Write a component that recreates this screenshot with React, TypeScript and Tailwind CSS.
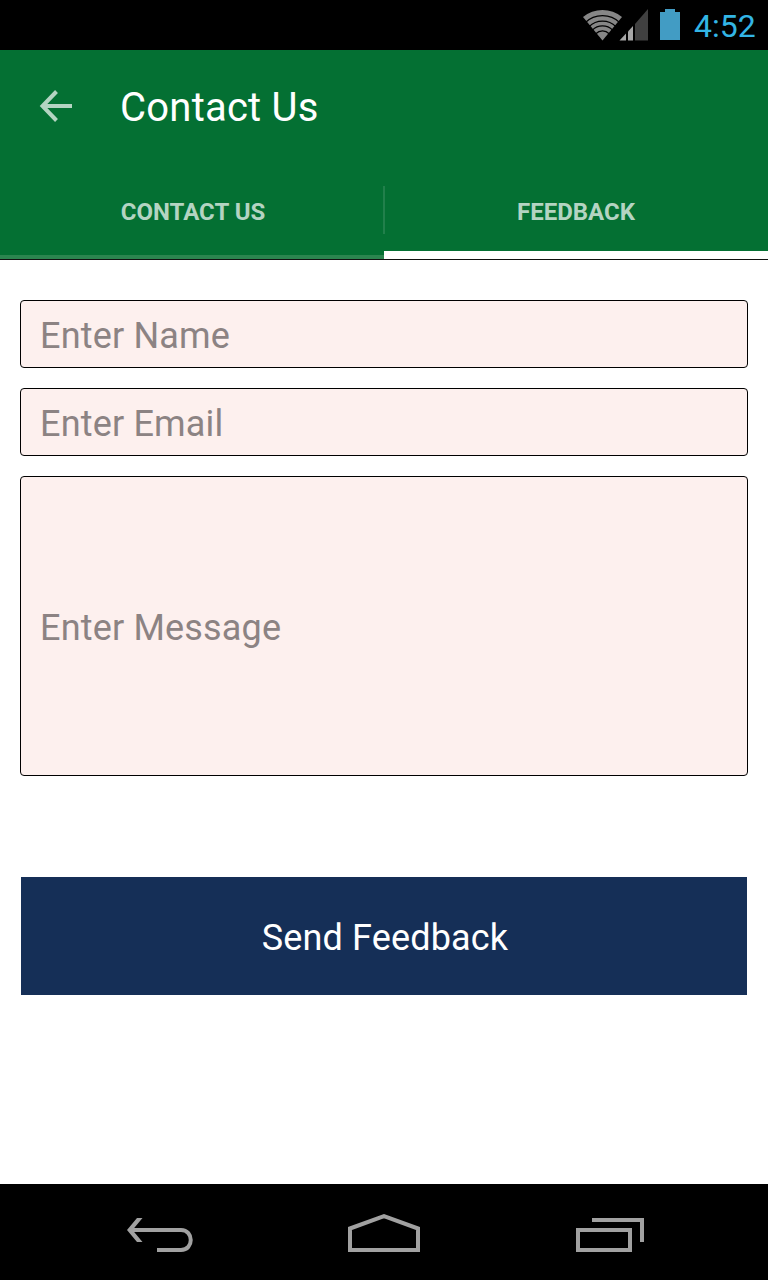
import React from 'react';

function StatusBar() {
  return (
    <div className="flex h-[50px] shrink-0 items-center bg-black pl-[580px]">
      <svg width="112" height="50" viewBox="580 0 112 50" className="shrink-0">
        <path d="M602.5 40.5 L583 17 A30.5 30.5 0 0 1 622 17 Z" fill="#868686" />
        <g fill="none" stroke="#000" strokeWidth="1.2">
          <path d="M585.1 22.7 A24.9 24.9 0 0 1 619.9 22.7" />
          <path d="M589 26.7 A19.3 19.3 0 0 1 616 26.7" />
          <path d="M592.3 30.1 A14.5 14.5 0 0 1 612.7 30.1" />
          <path d="M595.8 33.7 A9.5 9.5 0 0 1 609.2 33.7" />
        </g>
        <path d="M635 24 L648 9 V40.5 H635 Z" fill="#404040" />
        <path d="M619.5 40.5 L626 33.5 V40.5 Z" fill="#a6a6a6" />
        <path d="M628 31.5 L633 26 V40.5 H628 Z" fill="#a6a6a6" />
        <path d="M660 12 H665 V9 H675 V12 H680 V40 H660 Z" fill="#429cc4" />
      </svg>
      <span className="ml-[2px] pt-[2px] text-[32px] leading-[50px] text-[#33b5e5]">4:52</span>
    </div>
  );
}

function Header() {
  return (
    <header className="shrink-0 border-b border-[#111] bg-[#047033]">
      <div className="flex h-28 items-center pl-9">
        <svg width="40" height="40" viewBox="0 0 40 40" fill="none" stroke="#b4d4c2" strokeWidth="4">
          <path d="M36 20 H7 M20.5 5.5 L6.5 20 L20.5 34.5" />
        </svg>
        <h1 className="ml-11 pt-1 text-[40px] leading-none tracking-[0.23px] text-white">Contact Us</h1>
      </div>
      <nav className="flex h-[97px] text-2xl font-bold text-[#b4d4c2]">
        <button className="flex flex-1 flex-col border-b-4 border-[#2b854f]">
          <span className="flex h-[97px] w-full shrink-0 items-center justify-center pl-[2px] pt-[2px]">
            CONTACT US
          </span>
        </button>
        <button className="relative flex flex-1 flex-col border-b-8 border-white">
          <span className="absolute left-[-1px] top-6 h-12 w-[2px] bg-[#21804b]" />
          <span className="flex h-[97px] w-full shrink-0 items-center justify-center pt-[2px]">FEEDBACK</span>
        </button>
      </nav>
    </header>
  );
}

const field =
  'block w-full rounded-[4px] border border-black bg-[#fdf0ee] px-[19px] pt-1 text-[36px] tracking-[0.18px] text-black outline-none placeholder:text-[#8c8383] placeholder:opacity-100';

function NavigationBar() {
  return (
    <footer className="flex h-24 shrink-0 bg-black">
      <svg width="768" height="96" viewBox="0 1184 768 96" fill="none" stroke="#a1a1a1" strokeWidth="4">
        <path d="M130 1230 H181 C194 1230 194 1250 181 1250 H157" />
        <path d="M127 1230 L137 1218 H142.5 L132.5 1230 L142.5 1242 H137 Z" fill="#a1a1a1" stroke="none" />
        <path d="M350 1228.5 L384 1216.2 L418 1228.5 V1250 H350 Z" />
        <path d="M578 1230 H630 V1250 H578 Z" />
        <path d="M592 1220 H642 V1242" />
      </svg>
    </footer>
  );
}

export default function App() {
  return (
    <div className="flex h-[1280px] w-[768px] flex-col overflow-hidden bg-white font-['Roboto',sans-serif]">
      <StatusBar />
      <Header />
      <main className="flex-1 px-5 pt-10">
        <form className="flex flex-col gap-5" onSubmit={(e) => e.preventDefault()}>
          <input className={`${field} h-[68px]`} placeholder="Enter Name" />
          <input className={`${field} h-[68px]`} placeholder="Enter Email" />
          <input className={`${field} h-[300px]`} placeholder="Enter Message" />
          <button className="mx-px mt-[81px] h-[118px] bg-[#152f57] pl-[2px] pt-1 text-[36px] tracking-[0.15px] text-white">
            Send Feedback
          </button>
        </form>
      </main>
      <NavigationBar />
    </div>
  );
}
